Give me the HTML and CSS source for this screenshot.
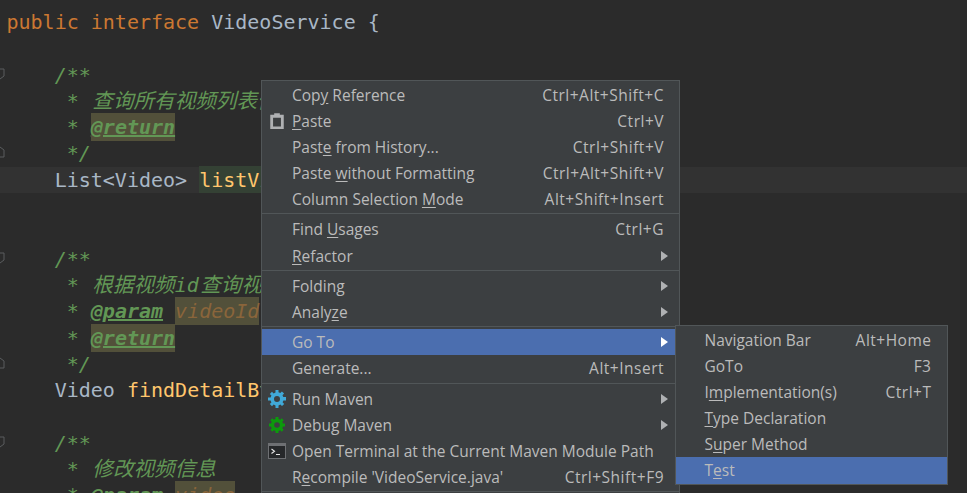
FILE: index.html
```html
<!DOCTYPE html>
<html lang="en">
<head>
<meta charset="utf-8">
<title>VideoService</title>
<link rel="stylesheet" href="styles.css">
</head>
<body>
<main class="editor">
  <div class="line"><span class="kw">public interface </span><span class="cls">VideoService {</span></div>
  <div class="line"></div>
  <div class="line"><svg class="fold" viewBox="0 0 5 12"><path d="M-5 1H4V8L0 11H-5"/></svg><span class="doc">    /**</span></div>
  <div class="line"><span class="doc">     * <span class="cjk">查询所有视频列表信息</span></span></div>
  <div class="line"><span class="doc">     * <span class="tag tag-hl">@return</span></span></div>
  <div class="line"><svg class="fold" viewBox="0 0 5 12"><path d="M-5 11H4V4L0 1H-5"/></svg><span class="doc">     */</span></div>
  <div class="line current"><span class="cls">    List&lt;Video&gt; </span><span class="fn fn-hl">listVideo</span></div>
  <div class="line"></div>
  <div class="line"></div>
  <div class="line"><svg class="fold" viewBox="0 0 5 12"><path d="M-5 1H4V8L0 11H-5"/></svg><span class="doc">    /**</span></div>
  <div class="line"><span class="doc">     * <span class="cjk">根据视频</span>id<span class="cjk">查询视频详情</span></span></div>
  <div class="line"><span class="doc">     * <span class="tag">@param</span> <span class="arg">videoId</span></span></div>
  <div class="line"><span class="doc">     * <span class="tag tag-hl">@return</span></span></div>
  <div class="line"><svg class="fold" viewBox="0 0 5 12"><path d="M-5 11H4V4L0 1H-5"/></svg><span class="doc">     */</span></div>
  <div class="line"><span class="cls">    Video </span><span class="fn">findDetailById</span></div>
  <div class="line"></div>
  <div class="line"><svg class="fold" viewBox="0 0 5 12"><path d="M-5 1H4V8L0 11H-5"/></svg><span class="doc">    /**</span></div>
  <div class="line"><span class="doc">     * <span class="cjk">修改视频信息</span></span></div>
  <div class="line"><span class="doc">     * <span class="tag">@param</span> <span class="arg">video</span></span></div>
</main>

<nav class="menu context">
  <div class="row"><span class="slot"></span><span class="label">Cop<u>y</u> Reference</span><span class="keys">Ctrl+Alt+Shift+C</span></div>
  <div class="row"><span class="slot"><svg class="icon" viewBox="0 0 16 16"><path fill="#afb1b3" fill-rule="evenodd" d="M2 2.5H5.5V1H10.5V2.5H14V15H2ZM4.5 5V12.8H11.5V5Z"/></svg></span><span class="label"><u>P</u>aste</span><span class="keys">Ctrl+V</span></div>
  <div class="row"><span class="slot"></span><span class="label">Past<u>e</u> from History...</span><span class="keys">Ctrl+Shift+V</span></div>
  <div class="row"><span class="slot"></span><span class="label">Paste <u>w</u>ithout Formatting</span><span class="keys">Ctrl+Alt+Shift+V</span></div>
  <div class="row"><span class="slot"></span><span class="label">Column Selection <u>M</u>ode</span><span class="keys">Alt+Shift+Insert</span></div>
  <hr class="sep">
  <div class="row"><span class="slot"></span><span class="label">Find <u>U</u>sages</span><span class="keys">Ctrl+G</span></div>
  <div class="row"><span class="slot"></span><span class="label"><u>R</u>efactor</span><span class="arrow"></span></div>
  <hr class="sep">
  <div class="row"><span class="slot"></span><span class="label">Folding</span><span class="arrow"></span></div>
  <div class="row"><span class="slot"></span><span class="label">Analy<u>z</u>e</span><span class="arrow"></span></div>
  <hr class="sep">
  <div class="row active"><span class="slot"></span><span class="label">Go To</span><span class="arrow arrow-on"></span></div>
  <div class="row"><span class="slot"></span><span class="label">Generate...</span><span class="keys">Alt+Insert</span></div>
  <hr class="sep">
  <div class="row"><span class="slot"><svg class="icon" viewBox="0 0 18 18"><path fill="#40a9d8" fill-rule="evenodd" d="M7.5 0H10.5V2.3L12.3 3L13.9 1.4L16.1 3.6L14.5 5.2L15.3 7H18V10.5H15.4L14.6 12.3L16.2 13.9L14 16.1L12.4 14.5L10.5 15.4V18H7.5V15.4L5.6 14.6L4 16.2L1.8 14L3.4 12.4L2.6 10.5H0V7.5H2.6L3.4 5.6L1.8 4L4 1.8L5.6 3.4L7.5 2.6ZM9 6A3 3 0 1 0 9 12A3 3 0 1 0 9 6Z"/></svg></span><span class="label">Run Maven</span><span class="arrow"></span></div>
  <div class="row"><span class="slot"><svg class="icon" viewBox="0 0 18 18"><path fill="#0c9a0c" fill-rule="evenodd" d="M7.5 1H10.5V3L12.3 3.7L13.7 2.3L15.7 4.3L14.3 5.7L15 7.5H17V10.5H15L14.3 12.3L15.7 13.7L13.7 15.7L12.3 14.3L10.5 15V17H7.5V15L5.7 14.3L4.3 15.7L2.3 13.7L3.7 12.3L3 10.5H1V7.5H3L3.7 5.7L2.3 4.3L4.3 2.3L5.7 3.7L7.5 3ZM9 6.2A2.8 2.8 0 1 0 9 11.8A2.8 2.8 0 1 0 9 6.2Z"/></svg></span><span class="label">Debug Maven</span><span class="arrow"></span></div>
  <div class="row"><span class="slot"><svg class="icon" viewBox="0 0 18 16"><rect width="18" height="16" fill="#6e7073"/><rect x="1" y="3" width="16" height="12" fill="#26282a"/><path d="M3.5 6L6.5 8.3L3.5 10.5M8 11.5H12" fill="none" stroke="#e6e6e6" stroke-width="1.1"/></svg></span><span class="label">Open Terminal at the Current Maven Module Path</span></div>
  <div class="row"><span class="slot"></span><span class="label">R<u>e</u>compile 'VideoService.java'</span><span class="keys">Ctrl+Shift+F9</span></div>
  <hr class="sep">

  <div class="menu submenu">
    <div class="row"><span class="label">Navigation Bar</span><span class="keys">Alt+Home</span></div>
    <div class="row"><span class="label">GoTo</span><span class="keys">F3</span></div>
    <div class="row"><span class="label">I<u>m</u>plementation(s)</span><span class="keys">Ctrl+T</span></div>
    <div class="row"><span class="label"><u>T</u>ype Declaration</span></div>
    <div class="row"><span class="label">S<u>u</u>per Method</span></div>
    <div class="row active"><span class="label">T<u>e</u>st</span></div>
  </div>
</nav>
</body>
</html>
```

FILE: styles.css
```css
html, body {
  margin: 0;
  height: 100%;
  overflow: hidden;
  background: #2b2b2b;
}

.editor {
  padding-top: 9px;
  font: 20px/26.3px "DejaVu Sans Mono", "Noto Sans CJK SC", monospace;
  color: #a9b7c6;
}

.line {
  height: 26.3px;
  padding-left: 6.5px;
  position: relative;
  white-space: pre;
}

.current {
  background: #323232;
}

.fold {
  position: absolute;
  left: 0;
  top: 6px;
  width: 5px;
  height: 12px;
  fill: none;
  stroke: #5a5d5f;
  overflow: hidden;
}

.kw { color: #cc7832; }
.cls { color: #a9b7c6; }
.fn { color: #ffc66d; }

.fn-hl {
  background: #344134;
  padding: 1.5px 0;
}

.doc {
  color: #629755;
  font-style: italic;
}

.cjk {
  font-family: "Noto Sans CJK SC", sans-serif;
  font-size: 20.6px;
  line-height: 1;
  margin-left: 1.5px;
}

.tag {
  font-weight: bold;
  text-decoration: underline;
}

.tag-hl {
  background: #52503a;
  padding: 2px 0;
}

.arg {
  color: #8a653b;
  background: #52503a;
  padding: 2px 0;
}

.menu {
  position: absolute;
  box-sizing: border-box;
  background: #3c3f41;
  border: 1px solid #515658;
  font: 15.5px/26.2px "Open Sans", "Noto Sans", sans-serif;
  color: #bbbbbb;
}

.context {
  left: 261px;
  top: 80px;
  width: 419px;
  padding-top: 0.5px;
}

.submenu {
  left: 412.5px;
  top: 243.5px;
  width: 273px;
  height: 160px;
  padding-top: 1px;
}

.row {
  display: flex;
  align-items: center;
  height: 26.2px;
  padding-right: 15px;
  white-space: nowrap;
}

.submenu .row {
  padding: 0 15px 0 29px;
}

.active {
  background: #4b6eaf;
}

.slot {
  width: 30px;
  flex: none;
  display: flex;
  justify-content: center;
}

.icon {
  width: 18px;
  height: 18px;
}

.keys,
.arrow {
  margin-left: auto;
}

.keys {
  letter-spacing: 0.5px;
}

.arrow {
  width: 0;
  height: 0;
  margin-right: -4px;
  border-left: 7px solid #afb1b3;
  border-top: 5px solid transparent;
  border-bottom: 5px solid transparent;
}

.arrow-on {
  border-left-color: #ffffff;
}

.sep {
  height: 3px;
  margin: 1px 0 0;
  border: 0;
  border-top: 1px solid #515658;
  box-sizing: border-box;
}

u {
  text-underline-offset: 2px;
}
```
